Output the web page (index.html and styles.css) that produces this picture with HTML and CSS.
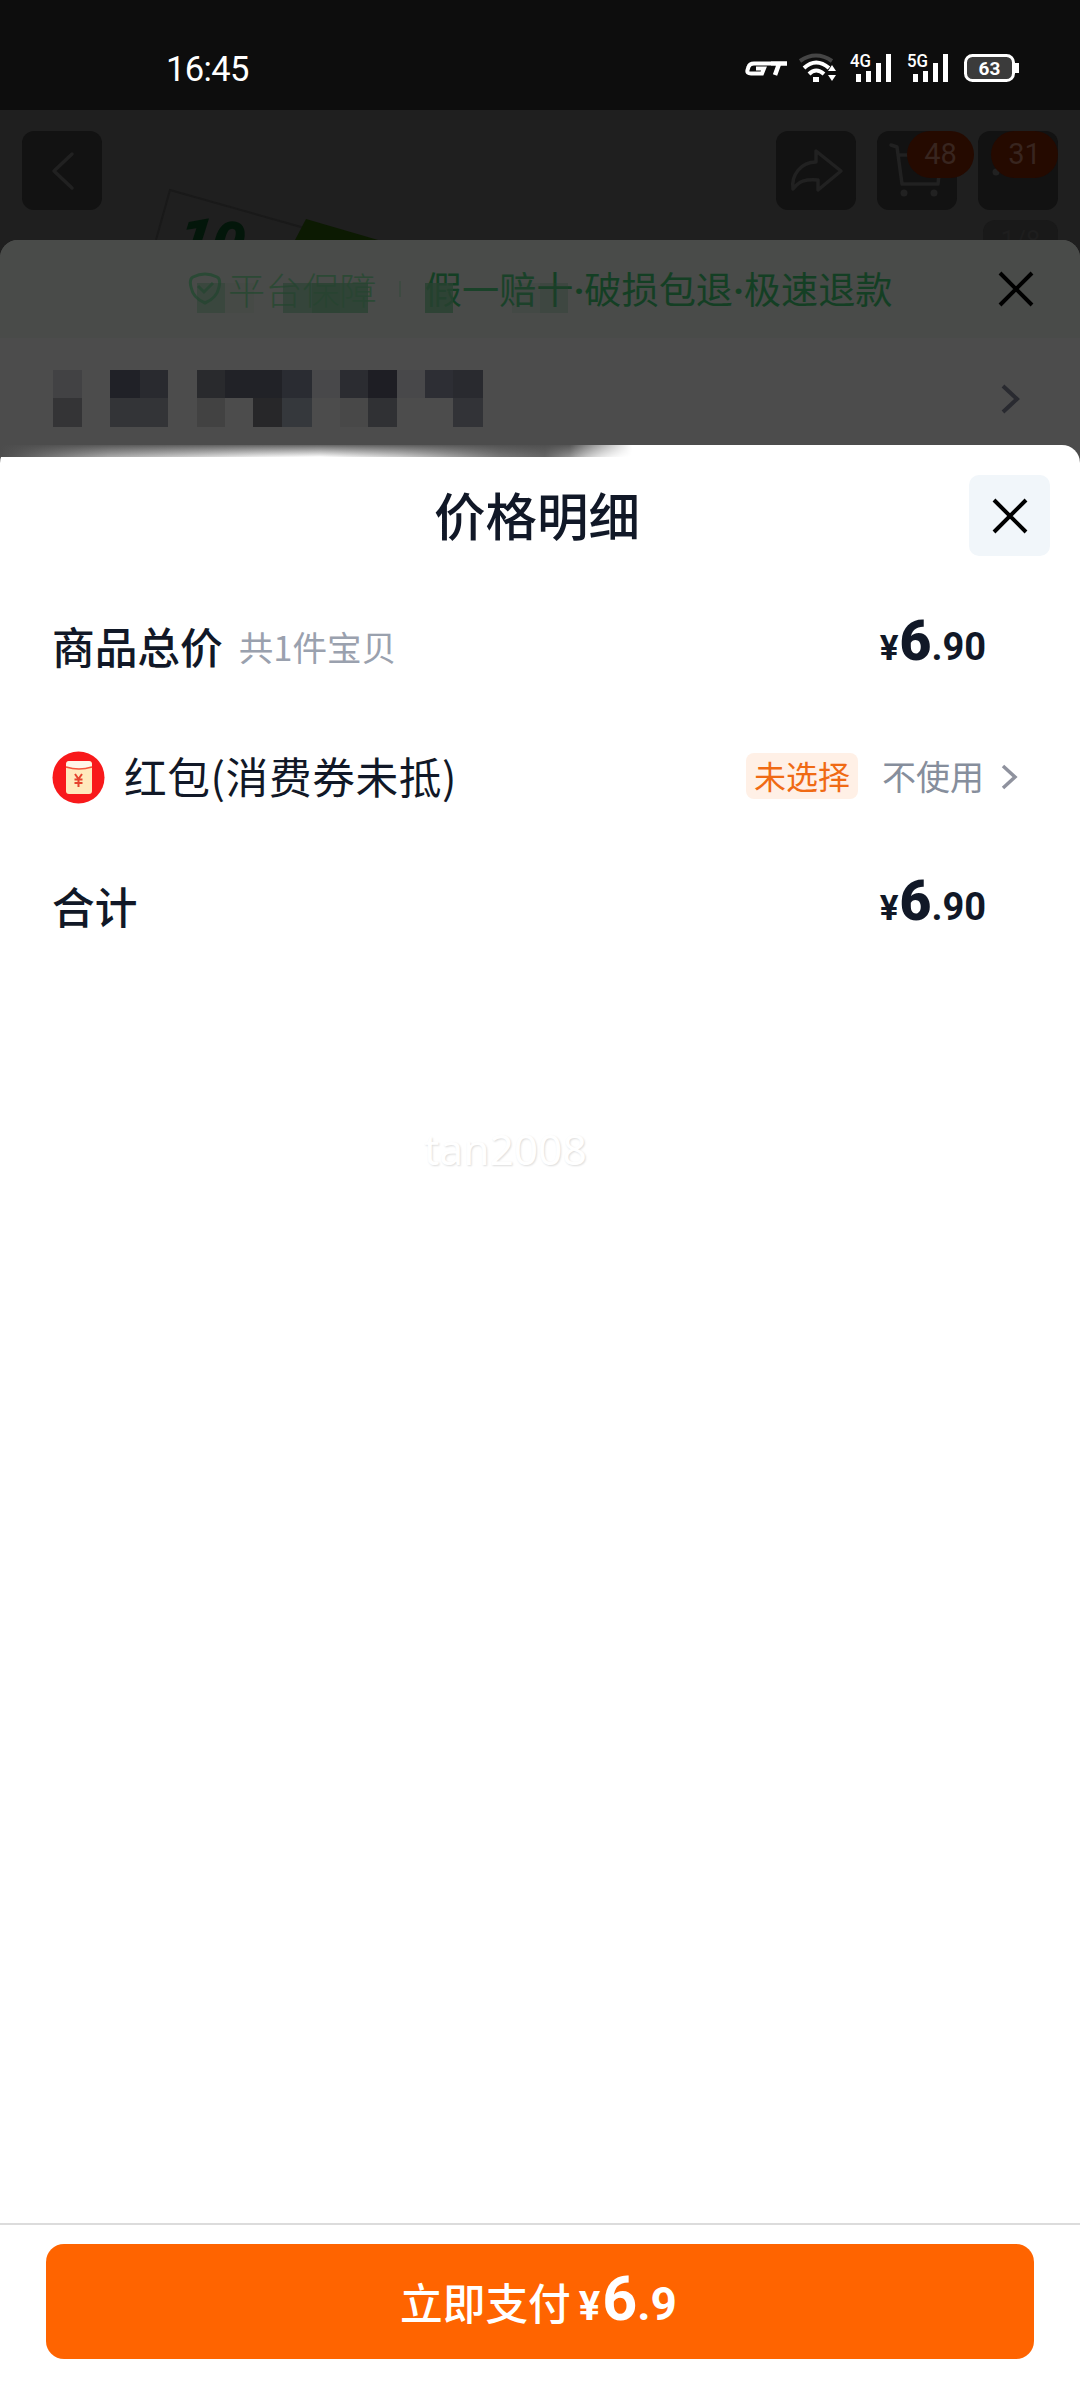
FILE: index.html
```html
<!DOCTYPE html>
<html lang="zh-CN">
<head>
<meta charset="utf-8">
<title>价格明细</title>
<link rel="stylesheet" href="styles.css">
</head>
<body>
<div class="screen">
  <header class="status">
    <span class="time">16:45</span>
    <svg class="status-icons" width="280" height="34" viewBox="0 0 280 34" fill="none">
      <path d="M27 11.500H10Q5.500 11.500 4.500 15L3.500 18Q2.500 21.500 7 21.500H18L20 16.500H12" stroke="#fff" stroke-width="4"/>
      <path d="M27 11.500H43M35 12L31 23" stroke="#fff" stroke-width="4.500"/>
      <path d="M56 9Q72-2 88 9" stroke="#454545" stroke-width="4"/>
      <path d="M60 16Q72 5 85 16" stroke="#fff" stroke-width="4"/>
      <path d="M65 22Q72 15 80 22" stroke="#fff" stroke-width="4"/>
      <path d="M69 25h6v5h-6z" fill="#fff"/>
      <path d="M84 19l4-6 4 6zM84 23l4 6 4-6z" fill="#fff"/>
      <path d="M112 22h5v8h-5zM122 19h5v11h-5zM132 11h5v19h-5zM142 2h5v28h-5z" fill="#fff"/>
      <path d="M169 22h5v8h-5zM179 19h5v11h-5zM189 11h5v19h-5zM199 2h5v28h-5z" fill="#fff"/>
      <text class="net" x="106" y="15" textLength="21" lengthAdjust="spacingAndGlyphs">4G</text>
      <text class="net" x="163" y="15" textLength="21" lengthAdjust="spacingAndGlyphs">5G</text>
      <rect x="221.500" y="3.500" width="48" height="25" rx="7" fill="#3b3b3b" stroke="#fff" stroke-width="3"/>
      <path d="M271 11h4v10h-4z" fill="#fff"/>
      <text class="batt" x="245.500" y="23" text-anchor="middle">63</text>
    </svg>
  </header>

  <section class="hero">
    <svg class="product" width="320" height="60" viewBox="0 0 320 60">
      <path d="M38 60L52 10L190 49" stroke="#191919" stroke-width="2" fill="none"/>
      <text class="product-name" x="58" y="77" textLength="66" lengthAdjust="spacingAndGlyphs" transform="rotate(8 58 77)">10</text>
      <path d="M177 60L188 39L260 60z" fill="#0c1a02"/>
    </svg>
    <div class="tool">
      <svg width="80" height="80" viewBox="0 0 80 80"><path class="line" d="M50 23L32 40L50 57" stroke-width="4"/></svg>
    </div>
    <div class="tools">
      <div class="tool">
        <svg width="80" height="80" viewBox="0 0 80 80"><path class="line" d="M40 20L65 40L42 59V49C29 48 23 50 17 58C15 44 25 31 40 31Z"/></svg>
      </div>
      <div class="tool">
        <svg width="80" height="80" viewBox="0 0 80 80"><path class="line" d="M14 14L20 16L25 53H61L64 24H22"/><circle class="dot" cx="27" cy="62" r="3.500"/><circle class="dot" cx="57" cy="62" r="3.500"/></svg>
        <span class="badge badge-cart">48</span>
      </div>
      <div class="tool">
        <svg width="80" height="80" viewBox="0 0 80 80"><circle class="dot" cx="18" cy="41" r="3.500"/><circle class="dot" cx="40" cy="41" r="5"/></svg>
        <span class="badge badge-more">31</span>
      </div>
    </div>
    <div class="page-no">1/8</div>
  </section>

  <section class="order">
    <div class="promise">
      <svg class="shield" width="34" height="36" viewBox="0 0 34 36"><path d="M5 6Q17 0 29 6Q33 8 31 16Q29 27 17 32Q5 27 3 16Q1 8 5 6Z"/><path d="M10 15L16 21L25 12"/></svg>
      <span class="guard">平台保障</span><i class="bar"></i><span class="terms"><b class="weak">假</b><b class="mid">一赔</b>十<i>·</i>破损包退<i>·</i>极速退款</span>
      <svg class="order-close" width="36" height="36" viewBox="0 0 36 36"><path d="M2 2L34 34M34 2L2 34"/></svg>
      <svg class="mosaic" width="400" height="30" viewBox="0 0 400 30">
        <g fill="#284231"><path d="M0 0h28v30H0z" opacity=".55"/><path d="M28 0h29v30H28z" opacity=".12"/><path d="M86 0h29v30H86z" opacity=".75"/><path d="M115 0h28v30H115z"/><path d="M143 0h28v30H143z" opacity=".95"/><path d="M228 0h28v30H228z"/><path d="M315 0h28v30H315z" opacity=".2"/><path d="M343 0h28v30H343z" opacity=".4"/></g>
      </svg>
    </div>
    <div class="address">
      <svg class="pixels" width="430" height="57" viewBox="0 0 430 57">
        <path fill="#424244" d="M0 0h29v28H0z"/><path fill="#343436" d="M0 28h29v29H0z"/>
        <path fill="#202127" d="M57 0h30v28H57z"/><path fill="#292a2f" d="M87 0h28v28H87z"/><path fill="#333437" d="M57 28h58v29H57z"/>
        <path fill="#292a2d" d="M144 0h28v28h-28z"/><path fill="#212227" d="M172 0h57v28h-57z"/><path fill="#2a2c32" d="M229 0h30v28h-30z"/>
        <path fill="#424242" d="M144 28h28v29h-28z"/><path fill="#272729" d="M200 28h29v29h-29z"/><path fill="#35383c" d="M229 28h30v29h-30z"/>
        <path fill="#48484a" d="M259 0h28v28h-28zM344 0h28v28h-28z"/><path fill="#2b2c31" d="M287 0h28v28h-28z"/><path fill="#1e1e24" d="M315 0h29v28h-29z"/><path fill="#484848" d="M287 28h28v29h-28z"/><path fill="#303134" d="M315 28h29v29h-29z"/>
        <path fill="#2d2e34" d="M372 0h28v28h-28z"/><path fill="#292a2f" d="M400 0h30v28h-30z"/><path fill="#323337" d="M400 28h30v29h-30z"/>
      </svg>
      <svg class="go" width="20" height="30" viewBox="0 0 20 30"><path d="M3 2L17 15L3 28" stroke="#292a30" stroke-width="4" fill="none"/></svg>
    </div>
  </section>

  <main class="sheet">
    <div class="smudge"></div>
    <div class="head">
      <h1>价格明细</h1>
      <div class="close"><svg width="36" height="36" viewBox="0 0 36 36"><path d="M2 2L34 34M34 2L2 34"/></svg></div>
    </div>
    <div class="row">
      <span class="label strong">商品总价</span><span class="count">共1件宝贝</span>
      <span class="price"><i>¥</i><b>6</b><em>.90</em></span>
    </div>
    <div class="row">
      <svg class="packet" width="53" height="53" viewBox="0 0 53 53"><circle cx="26.500" cy="26.500" r="26" fill="#f8191b"/><rect x="14" y="10" width="26" height="33" rx="3" fill="#ffe9bd"/><path d="M14 15q0-5 4-5h18q4 0 4 5q-13 5-26 0z" fill="#fff5e8"/><path d="M14 16q13 4 26 0" stroke="#f4533b" stroke-width="1.500" fill="none"/><path d="M23 23l3.500 5 3.500-5M26.500 28v8M22.500 28.500h8M22.500 32h8" stroke="#e5432e" stroke-width="2" fill="none"/></svg>
      <span class="label coupon">红包(消费券未抵)</span>
      <span class="tag">未选择</span><span class="unused">不使用</span>
      <svg class="next" width="17" height="26" viewBox="0 0 17 26"><path d="M2 2L14 13L2 24" stroke="#8f929e" stroke-width="3.500" fill="none"/></svg>
    </div>
    <div class="row">
      <span class="label strong">合计</span>
      <span class="price"><i>¥</i><b>6</b><em>.90</em></span>
    </div>
    <div class="watermark">tan2008</div>
    <footer class="pay-bar">
      <button class="pay"><span>立即支付</span><i>¥</i><b>6</b><em>.9</em></button>
    </footer>
  </main>
</div>
</body>
</html>
```
FILE: styles.css
```css
* { box-sizing: border-box; }
body { margin: 0; background: #4c4c4c; font-family: "Noto Sans CJK SC", sans-serif; }
i, em { font-style: normal; }
svg { flex: none; display: block; }
.screen { width: 1080px; height: 2400px; display: flex; flex-direction: column; overflow: hidden; }

.status { height: 110px; flex: none; background: #0d0d0d; display: flex; justify-content: space-between; padding: 52px 56px 0 166px; }
.time { font: 400 34.5px/34px Roboto, sans-serif; color: #fff; letter-spacing: -0.6px; }
.status-icons { overflow: visible; }
.net { font: 500 18px Roboto, sans-serif; fill: #fff; }
.batt { font: 700 19px Roboto, sans-serif; fill: #fff; }

.hero { position: relative; height: 130px; flex: none; background: #1f1f1f; display: flex; justify-content: space-between; padding: 21px 22px 0; }
.product { position: absolute; left: 118px; top: 70px; }
.product-name { font: italic 900 60px Roboto, sans-serif; fill: #03160a; }
.tools { display: flex; gap: 21px; }
.tool { position: relative; width: 80px; height: 79px; border-radius: 12px; background: #121212; }
.line { fill: none; stroke: #212121; stroke-width: 3.5; stroke-linejoin: round; stroke-linecap: round; }
.dot { fill: #212121; }
.badge { position: absolute; top: 0; width: 67px; height: 47px; border-radius: 24px; background: #250a00; color: #38251f; font: 400 29px/46px Roboto, sans-serif; text-align: center; }
.badge-cart { left: 30px; }
.badge-more { left: 13px; }
.page-no { position: absolute; right: 22px; top: 110px; width: 75px; height: 34px; border-radius: 12px 12px 0 0; background: #191919; color: #1e1e1e; font: 400 26px/40px Roboto, sans-serif; text-align: center; }

.order { height: 217px; flex: none; margin-bottom: -12px; background: linear-gradient(#494b49 98px, #4c4c4c 98px); border-radius: 18px 18px 0 0; box-shadow: 0 -18px 0 18px #1f1f1f; clip-path: inset(0); }
.promise { position: relative; height: 98px; display: flex; align-items: center; padding: 0 46px 0 188px; font-size: 37.2px; line-height: 54px; color: #143f24; }
.shield { opacity: .75; }
.shield path { fill: none; stroke: #20492f; stroke-width: 3; }
.guard { margin-left: 6px; color: #2c4935; font-weight: 300; }
.bar { width: 2px; height: 16px; background: #3d4a41; margin: 0 24px 0 22px; }
.terms { white-space: nowrap; }
.terms i { font-family: Roboto, sans-serif; font-weight: 700; letter-spacing: -0.5px; }
.terms b { font-weight: 400; }
.mid { color: #1a4229; }
.order-close { margin-left: auto; }
.order-close path, .close path { fill: none; stroke: #000; stroke-width: 4; }
.mosaic { position: absolute; left: 197px; top: 43px; opacity: .8; }
.address { display: flex; justify-content: space-between; padding: 32px 60px 0 53px; }
.go { margin-top: 14px; }

.sheet { position: relative; flex: 1; background: #fff; border-radius: 18px 18px 0 0; display: flex; flex-direction: column; color: #111827; }
.smudge { position: absolute; left: 0; top: 0; width: 635px; height: 12px; background: linear-gradient(rgba(76, 76, 76, .85), rgba(76, 76, 76, 0)), linear-gradient(90deg, #4c4c4c 0, #5a5a5a 20px, #aaa 110px, #eee 260px, #fff 320px, #ccc 400px, #777 500px, #666 545px, #fff 630px); -webkit-mask-image: linear-gradient(90deg, #000 570px, transparent 632px); mask-image: linear-gradient(90deg, #000 570px, transparent 632px); }
.head { height: 135px; padding: 30px 30px 0 434px; display: flex; justify-content: space-between; align-items: flex-start; }
h1 { margin: 2px 0 0; font-size: 51.5px; line-height: 74px; font-weight: 500; }
.close { width: 81px; height: 81px; border-radius: 10px; background: #f1f6fa; display: grid; place-items: center; }
.row { height: 130px; display: flex; align-items: center; padding: 0 62px 0 52px; }
.label { font-size: 42.7px; line-height: 62px; }
.strong { font-weight: 500; }
.count { font-size: 34.6px; color: #9aa1ae; margin: 1px 0 0 16px; font-weight: 400; }
.price { margin: 0 32px 0 auto; display: flex; align-items: baseline; font-family: Roboto, sans-serif; font-weight: 700; line-height: 60px; }
.price i { font-size: 35px; margin-right: 1px; }
.price b { font-size: 55px; }
.price em { font-size: 38px; }
.packet { margin-top: 5px; }
.coupon { margin-left: 19px; letter-spacing: .6px; }
.tag { margin: 2px 0 0 auto; background: #fff0e6; color: #f06a14; border-radius: 8px; height: 46px; padding: 0 8px; font-size: 32px; line-height: 44px; }
.unused { margin: 1px 0 0 24px; font-size: 34px; color: #868e9c; }
.next { margin: 4px 0 0 17px; }
.watermark { margin: 155px 0 0 424px; font: 400 42.5px/48px "Noto Sans", sans-serif; color: #fff; text-shadow: 1px 1px 2px #ddd; }
.pay-bar { margin-top: auto; height: 177px; border-top: 2px solid #dcdcdc; padding: 19px 46px 0; }
.pay { width: 100%; height: 115px; border: 0; border-radius: 18px; background: #ff6400; color: #fff; display: flex; justify-content: center; align-items: baseline; padding: 24px 3px 0 0; font: 500 42.7px/62px "Noto Sans CJK SC", sans-serif; }
.pay i { font: 700 40px/62px Roboto, sans-serif; margin: 0 2px 0 8px; }
.pay b { font: 700 61px/62px Roboto, sans-serif; }
.pay em { font: 700 46px/62px Roboto, sans-serif; }
```
